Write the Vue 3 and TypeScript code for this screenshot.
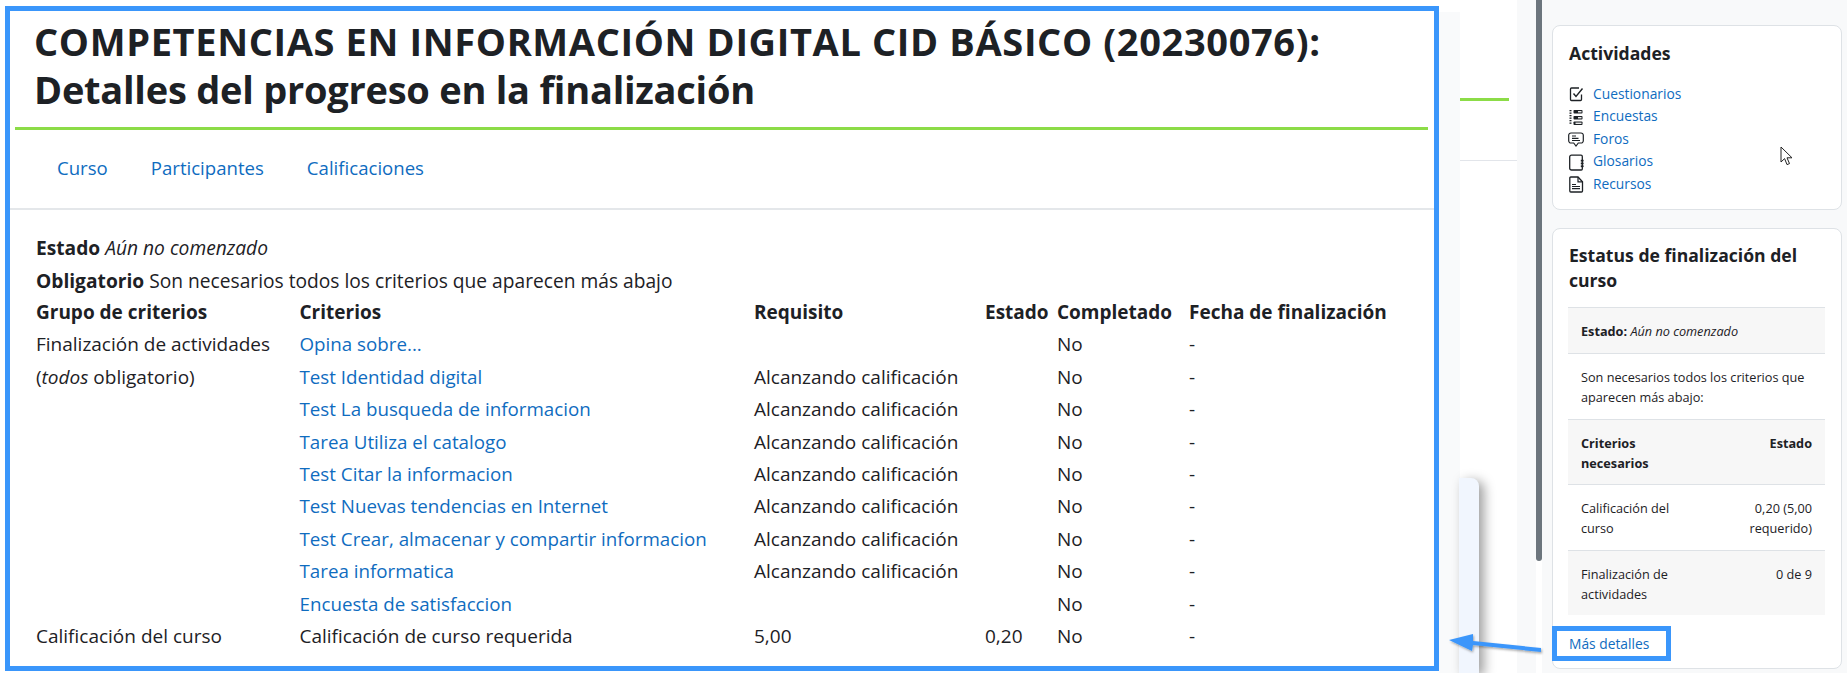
<script setup lang="ts">
interface Row { group?: string; groupHtml?: boolean; crit: string; link: boolean; req: string; state: string; done: string; date: string }
const rows: Row[] = [
  { group: 'Finalización de actividades', crit: 'Opina sobre...', link: true, req: '', state: '', done: 'No', date: '-' },
  { groupHtml: true, crit: 'Test Identidad digital', link: true, req: 'Alcanzando calificación', state: '', done: 'No', date: '-' },
  { crit: 'Test La busqueda de informacion', link: true, req: 'Alcanzando calificación', state: '', done: 'No', date: '-' },
  { crit: 'Tarea Utiliza el catalogo', link: true, req: 'Alcanzando calificación', state: '', done: 'No', date: '-' },
  { crit: 'Test Citar la informacion', link: true, req: 'Alcanzando calificación', state: '', done: 'No', date: '-' },
  { crit: 'Test Nuevas tendencias en Internet', link: true, req: 'Alcanzando calificación', state: '', done: 'No', date: '-' },
  { crit: 'Test Crear, almacenar y compartir informacion', link: true, req: 'Alcanzando calificación', state: '', done: 'No', date: '-' },
  { crit: 'Tarea informatica', link: true, req: 'Alcanzando calificación', state: '', done: 'No', date: '-' },
  { crit: 'Encuesta de satisfaccion', link: true, req: '', state: '', done: 'No', date: '-' },
  { group: 'Calificación del curso', crit: 'Calificación de curso requerida', link: false, req: '5,00', state: '0,20', done: 'No', date: '-' },
]
const tabs = ['Curso', 'Participantes', 'Calificaciones']
</script>

<template>
  <div class="page">
    <main class="frame">
      <header class="head">
        <h1><span class="t1">COMPETENCIAS EN INFORMACIÓN DIGITAL CID BÁSICO (20230076):</span><br /><span class="t2">Detalles del progreso en la finalización</span></h1>
      </header>
      <nav class="tabs">
        <a v-for="t in tabs" :key="t" href="#">{{ t }}</a>
      </nav>
      <section class="report">
        <p class="line first"><b>Estado</b> <i>Aún no comenzado</i></p>
        <p class="line second"><b>Obligatorio</b> Son necesarios todos los criterios que aparecen más abajo</p>
        <table class="crit">
          <colgroup>
            <col class="c1" /><col class="c2" /><col class="c3" /><col class="c4" /><col class="c5" /><col class="c6" />
          </colgroup>
          <thead>
            <tr>
              <th>Grupo de criterios</th><th>Criterios</th><th>Requisito</th><th>Estado</th><th>Completado</th><th>Fecha de finalización</th>
            </tr>
          </thead>
          <tbody>
            <tr v-for="r in rows" :key="r.crit">
              <td>
                <template v-if="r.groupHtml">(<i>todos</i> obligatorio)</template>
                <template v-else>{{ r.group }}</template>
              </td>
              <td><a v-if="r.link" href="#">{{ r.crit }}</a><template v-else>{{ r.crit }}</template></td>
              <td>{{ r.req }}</td>
              <td>{{ r.state }}</td>
              <td>{{ r.done }}</td>
              <td>{{ r.date }}</td>
            </tr>
          </tbody>
        </table>
      </section>
    </main>

    <div class="gutter"></div>
    <div class="peek">
      <div class="peek-green"></div>
      <div class="peek-line"></div>
      <div class="float-panel"></div>
    </div>
    <div class="gutter-b"></div>
    <div class="scroll"></div>

    <aside class="drawer">
      <section class="card c-act">
        <h5>Actividades</h5>
        <ul class="acts">
          <li>
            <svg viewBox="0 0 16 18" class="ic"><path d="M13.500 8.500v5a1 1 0 0 1-1 1H3.500a1 1 0 0 1-1-1V3a1 1 0 0 1 1-1H11" fill="none" stroke="#1d2125" stroke-width="1.300"/><path d="M5.500 7.500 8 10.500l6.500-8" fill="none" stroke="#1d2125" stroke-width="1.400"/></svg>
            <a href="#">Cuestionarios</a>
          </li>
          <li>
            <svg viewBox="0 0 16 18" class="ic"><g fill="#1d2125"><rect x="1.500" y="2" width="2" height="1.300"/><rect x="1.500" y="4.500" width="2" height="1.300"/><rect x="1.500" y="7" width="2" height="1.300"/><rect x="1.500" y="9.500" width="2" height="1.300"/><rect x="1.500" y="12" width="2" height="1.300"/><rect x="1.500" y="14.500" width="2" height="1.300"/><rect x="5.500" y="2" width="9" height="3.500" rx=".8"/><rect x="5.500" y="8" width="9" height="3.500" rx=".8"/><rect x="5.500" y="13.500" width="9" height="3.500" rx=".8"/></g><g fill="#fff"><rect x="10" y="3.100" width="3.500" height="1.300"/><rect x="10" y="9.100" width="3.500" height="1.300"/><rect x="7.500" y="14.600" width="6" height="1.300"/></g></svg>
            <a href="#">Encuestas</a>
          </li>
          <li>
            <svg viewBox="0 0 16 18" class="ic"><path d="M3 2h10a2.300 2.300 0 0 1 2.300 2.300v5.400A2.300 2.300 0 0 1 13 12h-2.700L8 15l-2.300-3H3A2.300 2.300 0 0 1 .700 9.700V4.300A2.300 2.300 0 0 1 3 2Z" fill="none" stroke="#1d2125" stroke-width="1.200"/><path d="M4 5h4M4 7.300h6.500M4 9.500h8" stroke="#1d2125" stroke-width="1.200"/></svg>
            <a href="#">Foros</a>
          </li>
          <li>
            <svg viewBox="0 0 16 18" class="ic"><path d="M3.500 2.200h9.500a1.300 1.300 0 0 1 1.300 1.300V16a1 1 0 0 1-1 1H3.500a1.800 1.800 0 0 1-1.800-1.800V4a1.800 1.800 0 0 1 1.800-1.800Z" fill="none" stroke="#1d2125" stroke-width="1.300"/><g fill="#1d2125"><rect x="12.800" y="6.800" width="2.800" height="1.700"/><rect x="12.800" y="9.600" width="2.800" height="1.700"/><rect x="12.800" y="12.400" width="2.800" height="1.700"/></g></svg>
            <a href="#">Glosarios</a>
          </li>
          <li>
            <svg viewBox="0 0 16 18" class="ic"><path d="M2.800 1H10l4.500 4.800V15a1 1 0 0 1-1 1H2.800a1 1 0 0 1-1-1V2a1 1 0 0 1 1-1Z" fill="none" stroke="#1d2125" stroke-width="1.300"/><path d="M10 1v4.800h4.500M4 8.500h4M4 10.500h8M4 12.700h8" fill="none" stroke="#1d2125" stroke-width="1.200"/></svg>
            <a href="#">Recursos</a>
          </li>
        </ul>
      </section>

      <section class="card c-status">
        <h5>Estatus de finalización del curso</h5>
        <div class="st-table">
          <div class="st-row shade"><span><b>Estado:</b> <i>Aún no comenzado</i></span></div>
          <div class="st-row"><span>Son necesarios todos los criterios que aparecen más abajo:</span></div>
          <div class="st-row shade two"><b class="l">Criterios necesarios</b><b class="r">Estado</b></div>
          <div class="st-row two"><span class="l">Calificación del curso</span><span class="r">0,20 (5,00 requerido)</span></div>
          <div class="st-row shade two"><span class="l">Finalización de actividades</span><span class="r">0 de 9</span></div>
        </div>
        <a class="more" href="#">Más detalles</a>
      </section>
    </aside>

    <svg class="arrow" viewBox="0 0 110 30" width="110" height="30">
      <defs>
        <filter id="sh" x="-10%" y="-30%" width="120%" height="170%"><feDropShadow dx="1" dy="1.500" stdDeviation="1.200" flood-color="#000" flood-opacity=".35"/></filter>
      </defs>
      <path d="M5 6 29 0 29 7 97 14 97 18 29 11 28 17Z" fill="#3b96fb" filter="url(#sh)"/>
    </svg>

    <svg class="cursor" viewBox="0 0 13 20" width="13" height="20">
      <path d="M1 1v15l3.600-3.400 2.400 6 2.500-1-2.500-5.800h5Z" fill="#fff" stroke="#222" stroke-width="1"/>
    </svg>
  </div>
</template>

<style scoped>
.page {
  position: relative;
  display: flex;
  width: 1847px;
  height: 673px;
  overflow: hidden;
  background: #fff;
  color: #1d2125;
  font-family: "Open Sans", "Noto Sans", sans-serif;
}
.frame {
  box-sizing: border-box;
  flex: none;
  width: 1434px;
  height: 665px;
  margin: 6px 0 0 5px;
  border: 5px solid #3a96fb;
  background: #fff;
}
.head {
  box-sizing: border-box;
  height: 119px;
  margin: 0 6px 0 5px;
  padding: 6px 0 0 19px;
  border-bottom: 3px solid #8cdc47;
}
h1 {
  margin: 0;
  font-size: 38px;
  line-height: 48px;
  font-weight: 700;
  white-space: nowrap;
}
.t1 { letter-spacing: 0.63px; }
.t2 { letter-spacing: -0.25px; }
.tabs {
  display: flex;
  gap: 43px;
  height: 80px;
  box-sizing: border-box;
  padding: 23px 0 0 47px;
  border-bottom: 2px solid #e4e7ea;
}
.tabs a {
  font-size: 18.600px;
  line-height: 30px;
  color: #0f6cbf;
  text-decoration: none;
}
.report {
  padding: 21px 0 0 26px;
  font-size: 19px;
}
.line {
  margin: 0;
  height: 33px;
  line-height: 33px;
  white-space: nowrap;
  font-size: 19.200px;
}
.second { height: 32px; }
.crit {
  border-collapse: collapse;
  table-layout: fixed;
  width: 1360px;
}
.c1 { width: 263.500px; }
.c2 { width: 454.500px; }
.c3 { width: 231px; }
.c4 { width: 72px; }
.c5 { width: 132px; }
.crit th, .crit td {
  padding: 0;
  height: 32.400px;
  line-height: 32.400px;
  text-align: left;
  white-space: nowrap;
  font-weight: 400;
}
.crit th { font-weight: 700; }
.crit a { color: #0f6cbf; text-decoration: none; font-size: 18.750px; }

.gutter { flex: none; width: 21px; background: #f9fafb; margin-top: 12px; }
.peek { flex: none; width: 57px; position: relative; background: #fff; }
.peek-green { width: 49px; height: 3px; margin-top: 98px; background: #8cdc47; }
.peek-line { height: 1px; margin-top: 59px; background: #e2e5ea; }
.float-panel {
  position: absolute;
  left: -1px;
  top: 478px;
  bottom: 0;
  width: 20px;
  background: #f1f6fe;
  border-top-right-radius: 8px;
  box-shadow: 5px 3px 12px rgba(0, 0, 0, 0.38);
}
.gutter-b { flex: none; width: 19px; background: #f8f9fa; }
.scroll {
  flex: none;
  width: 6px;
  height: 561px;
  background: #6c757d;
  border-bottom-left-radius: 3px;
  border-bottom-right-radius: 3px;
}
.drawer {
  flex: none;
  box-sizing: border-box;
  width: 305px;
  height: 673px;
  padding: 25px 5px 0 10px;
  background: #f8f9fa;
  display: flex;
  flex-direction: column;
  gap: 18px;
}
.card {
  box-sizing: border-box;
  background: #fff;
  border: 1px solid #dee2e6;
  border-radius: 8px;
  padding: 0 16px;
}
.c-act { height: 185px; }
.c-status { height: 441px; position: relative; }
h5 { margin: 0; font-size: 17.600px; font-weight: 700; line-height: 24.500px; }
.c-act h5 { padding-top: 15px; }
.c-status h5 { padding-top: 14px; }
.acts {
  list-style: none;
  margin: 0;
  padding: 0;
  margin-top: 16.500px;
  font-size: 13.800px;
}
.acts li {
  display: flex;
  align-items: center;
  height: 22.500px;
}
.acts a { color: #0f6cbf; text-decoration: none; margin-left: 9px; }
.ic { width: 16px; height: 18px; flex: none; margin: 3px 0 0 -1px; overflow: visible; }
.st-table {
  margin: 15px 0 0 -1px;
  font-size: 12.700px;
  line-height: 20px;
}
.st-row {
  box-sizing: border-box;
  height: 65.500px;
  padding: 13px 13px;
  border-top: 1px solid #dee2e6;
  display: flex;
  justify-content: space-between;
}
.st-row:first-child { height: 46px; }
.st-row.shade { background: #f7f7f7; }
.l { width: 110px; }
.r { width: 100px; text-align: right; }
.more {
  position: absolute;
  left: -1px;
  top: 397px;
  box-sizing: border-box;
  width: 119px;
  height: 35px;
  padding-left: 12px;
  border: 5px solid #3a96fb;
  background: #fff;
  color: #0f6cbf;
  font-size: 13.800px;
  line-height: 25px;
  text-decoration: none;
}
.arrow { position: absolute; left: 1444px; top: 634px; }
.cursor { position: absolute; left: 1780px; top: 146px; }
</style>
